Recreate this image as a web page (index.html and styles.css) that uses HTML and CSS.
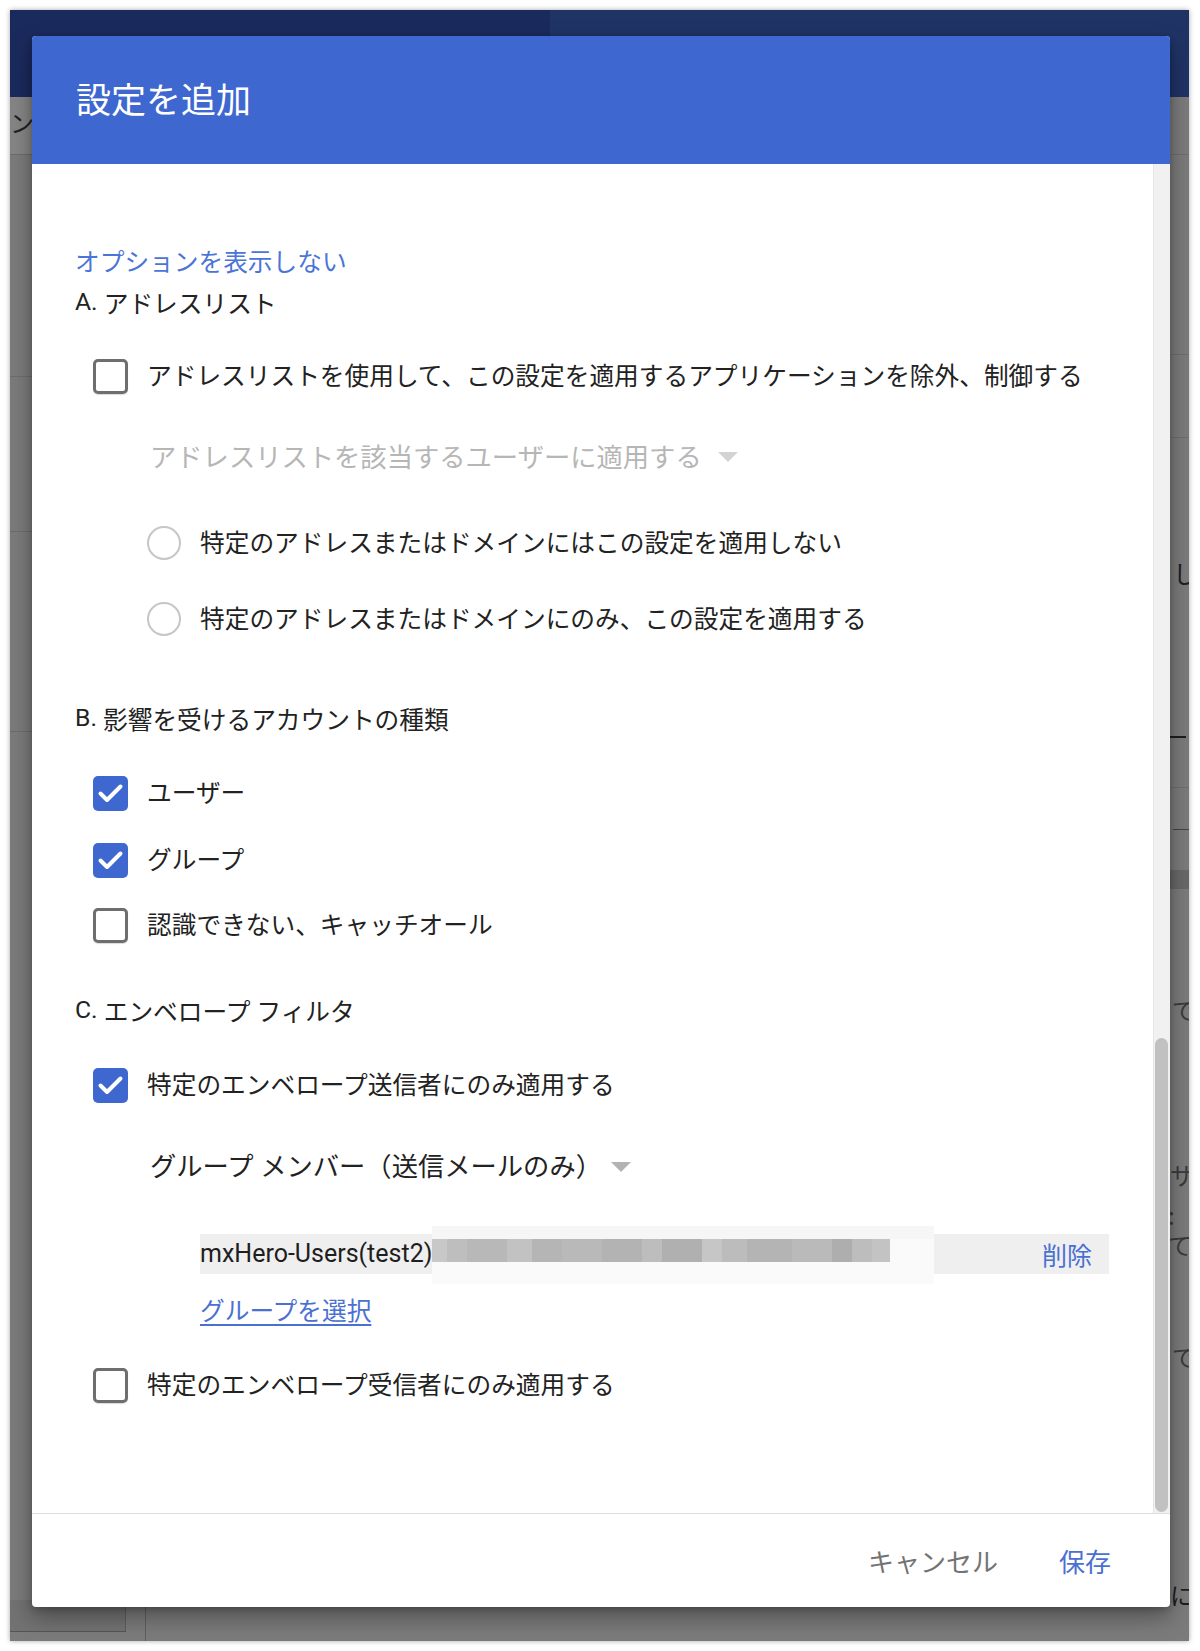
FILE: index.html
```html
<!DOCTYPE html>
<html lang="ja">
<head>
<meta charset="utf-8">
<title>設定を追加</title>
<link rel="stylesheet" href="styles.css">
</head>
<body>
<div class="frame">
  <div class="backdrop">
    <div class="bd-top"><div class="bd-top-left"></div><div class="bd-top-right"></div></div>
    <div class="bd-left-panel"><span class="bd-glyph bd-glyph-left">ン</span></div>
    <div class="bd-hline bd-l1"></div>
    <div class="bd-hline bd-l2"></div>
    <div class="bd-hline bd-l3"></div>
    <div class="bd-hline bd-r1"></div>
    <div class="bd-hline bd-r2"></div>
    <div class="bd-hline bd-r3"></div>
    <div class="bd-hline bd-r4"></div>
    <div class="bd-dash bd-d1"></div>
    <div class="bd-dash bd-d2"></div>
    <div class="bd-block"></div>
    <span class="bd-glyph bd-g1">し</span>
    <span class="bd-glyph bd-g2">で</span>
    <span class="bd-glyph bd-g3">サ</span>
    <span class="bd-glyph bd-g4">:て</span>
    <span class="bd-glyph bd-g5">で</span>
    <span class="bd-glyph bd-g6">に</span>
    <div class="bd-bottom-panel"></div>
    <div class="bd-vline"></div>
  </div>

  <div class="dialog">
    <header class="dlg-header">
      <h1 class="dlg-title">設定を追加</h1>
    </header>

    <div class="dlg-body">
      <div class="dlg-content">
        <a class="toggle-link">オプションを表示しない</a>
        <div class="section-title sp-a"><span class="latin">A.</span> アドレスリスト</div>

        <label class="option sp-cb1">
          <span class="box"></span>
          <span class="opt-text">アドレスリストを使用して、この設定を適用するアプリケーションを除外、制御する</span>
        </label>

        <div class="select select-disabled sp-dd1">
          <span class="select-text">アドレスリストを該当するユーザーに適用する</span>
          <span class="caret caret-disabled"></span>
        </div>

        <label class="radio-option sp-r1">
          <span class="radio"></span>
          <span class="opt-text">特定のアドレスまたはドメインにはこの設定を適用しない</span>
        </label>
        <label class="radio-option sp-r2">
          <span class="radio"></span>
          <span class="opt-text">特定のアドレスまたはドメインにのみ、この設定を適用する</span>
        </label>

        <div class="section-title sp-b"><span class="latin">B.</span> 影響を受けるアカウントの種類</div>

        <label class="option sp-u">
          <span class="box box-checked"><svg viewBox="0 0 35 35" class="check"><polyline points="7.5,17.5 14,24 27.5,10.5"/></svg></span>
          <span class="opt-text">ユーザー</span>
        </label>
        <label class="option sp-g">
          <span class="box box-checked"><svg viewBox="0 0 35 35" class="check"><polyline points="7.5,17.5 14,24 27.5,10.5"/></svg></span>
          <span class="opt-text">グループ</span>
        </label>
        <label class="option sp-c">
          <span class="box"></span>
          <span class="opt-text">認識できない、キャッチオール</span>
        </label>

        <div class="section-title sp-cc"><span class="latin">C.</span> エンベロープ フィルタ</div>

        <label class="option sp-s">
          <span class="box box-checked"><svg viewBox="0 0 35 35" class="check"><polyline points="7.5,17.5 14,24 27.5,10.5"/></svg></span>
          <span class="opt-text">特定のエンベロープ送信者にのみ適用する</span>
        </label>

        <div class="select sp-dd2">
          <span class="select-text">グループ<span class="latin"> </span>メンバー（送信メールのみ）</span>
          <span class="caret caret-enabled"></span>
        </div>

        <div class="chip sp-chip">
          <span class="chip-label">mxHero-Users(test2)</span>
          <span class="redact"><span class="mosaic"></span></span>
          <a class="chip-remove">削除</a>
        </div>

        <a class="pick-link sp-pick">グループを選択</a>

        <label class="option sp-rc">
          <span class="box"></span>
          <span class="opt-text">特定のエンベロープ受信者にのみ適用する</span>
        </label>
      </div>
      <div class="scrollbar"><div class="scroll-thumb"></div></div>
    </div>

    <footer class="dlg-footer">
      <button class="btn btn-cancel">キャンセル</button>
      <button class="btn btn-save">保存</button>
    </footer>
  </div>
</div>
</body>
</html>
```

FILE: styles.css
```css
* { box-sizing: border-box; }

html, body {
  margin: 0;
  padding: 0;
  background: #ffffff;
}

body {
  font-family: Roboto, "Noto Sans CJK JP", sans-serif;
  color: #222222;
}

.frame {
  position: relative;
  margin: 10px 11px 10px 10px;
  height: 1631px;
  padding: 26px 19px 0 22px;
  background: #7b7b7b;
  overflow: hidden;
  box-shadow: 0 0 5px rgba(0, 0, 0, 0.35);
}

/* ---------- dimmed page behind the dialog ---------- */
.backdrop {
  position: absolute;
  inset: 0;
  z-index: 0;
}

.bd-top {
  display: flex;
  height: 87px;
}
.bd-top-left { width: 540px; background: #1b2a5d; }
.bd-top-right { flex: 1; background: #1f3365; }

.bd-left-panel {
  position: absolute;
  left: 0;
  top: 87px;
  width: 30px;
  height: 58px;
  background: #858585;
  border-bottom: 1px solid #6c6c6c;
  overflow: hidden;
}
.bd-glyph {
  position: absolute;
  font-family: "Noto Sans CJK JP", sans-serif;
  font-size: 24px;
  line-height: 30px;
  color: #1e1e1e;
}
.bd-glyph-left { left: 0; top: 10px; }

.bd-hline {
  position: absolute;
  height: 1px;
  background: #6d6d6d;
}
.bd-l1 { left: 0; width: 24px; top: 366px; }
.bd-l2 { left: 0; width: 24px; top: 521px; }
.bd-l3 { left: 0; width: 24px; top: 721px; }
.bd-r1 { left: 1158px; width: 24px; top: 144px; }
.bd-r2 { left: 1158px; width: 24px; top: 344px; }
.bd-r3 { left: 1158px; width: 24px; top: 427px; }
.bd-r4 { left: 1158px; width: 24px; top: 777px; }

.bd-dash {
  position: absolute;
  height: 2px;
  background: #1e1e1e;
}
.bd-d1 { left: 1160px; width: 16px; top: 726px; }
.bd-d2 { left: 1163px; width: 16px; top: 819px; height: 1px; background: #444; }

.bd-block {
  position: absolute;
  left: 1160px;
  width: 20px;
  top: 860px;
  height: 19px;
  background: #686868;
}

.bd-g1 { left: 1163px; top: 548px; }
.bd-g2 { left: 1162px; top: 985px; color: #3a3a3a; }
.bd-g3 { left: 1160px; top: 1150px; color: #3a3a3a; }
.bd-g4 { left: 1158px; top: 1190px; color: #3a3a3a; }
.bd-g5 { left: 1162px; top: 1332px; color: #3a3a3a; }
.bd-g6 { left: 1160px; top: 1570px; }

.bd-bottom-panel {
  position: absolute;
  left: 0;
  top: 1590px;
  width: 116px;
  height: 32px;
  border-right: 1px solid #5e5e5e;
  border-bottom: 1px solid #555555;
  background: #727272;
}
.bd-vline {
  position: absolute;
  left: 135px;
  top: 1590px;
  width: 1px;
  height: 41px;
  background: #5e5e5e;
}

/* ---------- dialog ---------- */
.dialog {
  position: relative;
  z-index: 1;
  width: 1138px;
  height: 1571px;
  display: flex;
  flex-direction: column;
  background: #ffffff;
  border-radius: 4px;
  box-shadow: 0 10px 22px rgba(0, 0, 0, 0.35), 0 2px 6px rgba(0, 0, 0, 0.2);
  overflow: hidden;
}

.dlg-header {
  height: 128px;
  flex: none;
  display: flex;
  align-items: center;
  padding-left: 44px;
  padding-bottom: 4px;
  background: #3e67d0;
}
.dlg-title {
  margin: 0;
  font-family: "Noto Sans CJK JP", sans-serif;
  font-weight: 400;
  font-size: 35px;
  line-height: 40px;
  color: #ffffff;
}

.dlg-body {
  flex: 1;
  display: flex;
  min-height: 0;
}

.dlg-content {
  flex: 1;
  display: flex;
  flex-direction: column;
  align-items: flex-start;
  padding: 80px 0 0 43px;
  font-size: 24.7px;
}

.latin { font-family: Roboto, sans-serif; }

.toggle-link {
  display: flex;
  align-items: center;
  height: 34px;
  padding-bottom: 2px;
  font-family: "Noto Sans CJK JP", sans-serif;
  color: #4a74d8;
}

.section-title {
  display: flex;
  align-items: center;
  height: 34px;
  padding-bottom: 3px;
  white-space: pre;
  font-family: Roboto, "Noto Sans CJK JP", sans-serif;
  color: #222222;
}

.option, .radio-option {
  display: flex;
  align-items: center;
  height: 40px;
  font-family: "Noto Sans CJK JP", sans-serif;
  white-space: nowrap;
}
.option { margin-left: 18px; }
.radio-option { margin-left: 72px; }

.box {
  flex: none;
  width: 35px;
  height: 35px;
  border: 3px solid #6e6e6e;
  border-radius: 5px;
  margin-right: 19px;
  box-shadow: 0 1px 1px rgba(0, 0, 0, 0.15);
}
.box-checked {
  border: none;
  background: #3e67d0;
  box-shadow: none;
}
.check {
  display: block;
  width: 35px;
  height: 35px;
  fill: none;
  stroke: #ffffff;
  stroke-width: 4;
  stroke-linecap: round;
  stroke-linejoin: round;
}

.radio {
  flex: none;
  width: 34px;
  height: 34px;
  border: 2px solid #c6c6c6;
  border-radius: 50%;
  margin-right: 19px;
}

.opt-text { line-height: 34px; padding-bottom: 4px; color: #222222; }

.select {
  display: flex;
  align-items: center;
  height: 40px;
  margin-left: 75px;
  font-family: "Noto Sans CJK JP", sans-serif;
  font-size: 26.3px;
  white-space: nowrap;
}
.select-text { line-height: 36px; padding-bottom: 2px; color: #222222; }
.select-disabled .select-text { color: #b6b6b6; }

.caret {
  width: 0;
  height: 0;
  border-left: 10px solid transparent;
  border-right: 10px solid transparent;
  border-top: 10px solid #b3b3b3;
}
.caret-disabled { margin-left: 16px; border-top-color: #d3d3d3; }
.caret-enabled { margin-left: 9px; border-top-color: #b3b3b3; }

.chip {
  display: flex;
  align-items: center;
  width: 909px;
  height: 40px;
  margin-left: 125px;
  background: #efefef;
}
.chip-label {
  font-family: Roboto, sans-serif;
  font-size: 25px;
  line-height: 40px;
  color: #1e1e1e;
}
.redact {
  align-self: flex-start;
  flex: none;
  width: 502px;
  height: 58px;
  margin-top: -8px;
  padding-top: 13px;
  background: linear-gradient(#f6f6f6 0, #f6f6f6 13px, #fafafa 13px);
}
.mosaic {
  display: block;
  width: 458px;
  height: 23px;
  background: linear-gradient(to right,
    #c8c8c8 0, #c8c8c8 15px,
    #bebebe 15px, #bebebe 35px,
    #b8b8b8 35px, #b8b8b8 75px,
    #c2c2c2 75px, #c2c2c2 100px,
    #b5b5b5 100px, #b5b5b5 130px,
    #b9b9b9 130px, #b9b9b9 170px,
    #b3b3b3 170px, #b3b3b3 210px,
    #bdbdbd 210px, #bdbdbd 230px,
    #b0b0b0 230px, #b0b0b0 270px,
    #c6c6c6 270px, #c6c6c6 290px,
    #bcbcbc 290px, #bcbcbc 315px,
    #b4b4b4 315px, #b4b4b4 360px,
    #bababa 360px, #bababa 400px,
    #aeaeae 400px, #aeaeae 420px,
    #bdbdbd 420px, #bdbdbd 440px,
    #c3c3c3 440px, #c3c3c3 458px);
}
.chip-remove {
  margin-left: auto;
  padding-right: 17px;
  font-family: "Noto Sans CJK JP", sans-serif;
  font-size: 25px;
  line-height: 40px;
  color: #4a70d2;
}

.pick-link {
  display: flex;
  align-items: center;
  height: 34px;
  margin-left: 125px;
  font-family: "Noto Sans CJK JP", sans-serif;
  color: #4a70d2;
  text-decoration: underline;
  text-underline-offset: 4px;
  text-decoration-thickness: 1.5px;
}

/* vertical rhythm */
.sp-a { margin-top: 8px; }
.sp-cb1 { margin-top: 36px; }
.sp-dd1 { margin-top: 41px; }
.sp-r1 { margin-top: 46px; }
.sp-r2 { margin-top: 36px; }
.sp-b { margin-top: 63px; }
.sp-u { margin-top: 37px; }
.sp-g { margin-top: 27px; }
.sp-c { margin-top: 25px; }
.sp-cc { margin-top: 49px; }
.sp-s { margin-top: 37px; }
.sp-dd2 { margin-top: 42px; }
.sp-chip { margin-top: 47px; }
.sp-pick { margin-top: 18px; }
.sp-rc { margin-top: 39px; }

/* scrollbar */
.scrollbar {
  flex: none;
  width: 17px;
  padding: 874px 2px 1px 1px;
  background: #f1f1f1;
  border-left: 1px solid #e6e6e6;
}
.scroll-thumb {
  height: 474px;
  border-radius: 7px;
  background: #c1c1c1;
}

/* footer */
.dlg-footer {
  flex: none;
  height: 94px;
  display: flex;
  align-items: center;
  justify-content: flex-end;
  gap: 61px;
  padding-right: 59px;
  border-top: 1px solid #dedede;
}
.btn {
  padding: 0;
  border: none;
  background: none;
  font-family: "Noto Sans CJK JP", sans-serif;
  font-size: 26px;
  line-height: 36px;
}
.btn-cancel { color: #737373; }
.btn-save { color: #4a70d2; }
```
